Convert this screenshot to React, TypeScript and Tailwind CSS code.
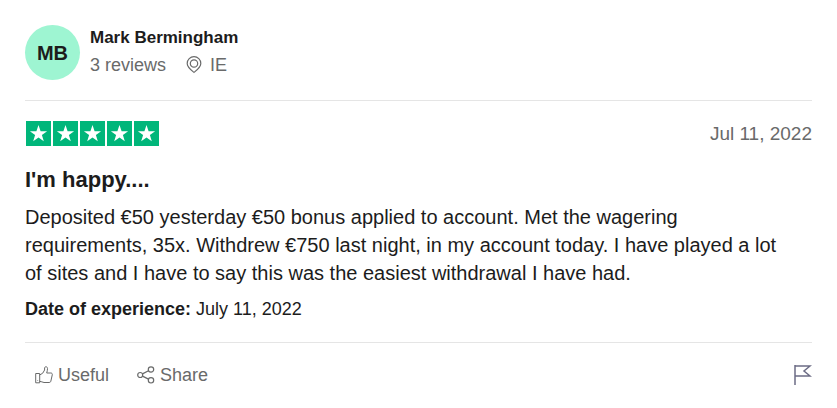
const review = {
  initials: "MB",
  name: "Mark Bermingham",
  reviews: "3 reviews",
  country: "IE",
  date: "Jul 11, 2022",
  title: "I'm happy....",
  text: "Deposited €50 yesterday €50 bonus applied to account. Met the wagering requirements, 35x. Withdrew €750 last night, in my account today. I have played a lot of sites and I have to say this was the easiest withdrawal I have had.",
  experience: "July 11, 2022",
};

function Stars() {
  return (
    <div className="flex gap-[2px] pl-px" role="img" aria-label="Rated 5 out of 5 stars">
      {[1, 2, 3, 4, 5].map((star) => (
        <svg key={star} viewBox="0 0 25 25" className="h-[25px] w-[25px]">
          <path fill="#00b67a" d="M0 0h25v25H0z" />
          <path
            fill="#fff"
            d="M12.5 4l2.1 6.2h6.500l-5.200 3.900 1.900 6.200-5.300-3.800-5.300 3.800 1.900-6.200-5.200-3.900h6.500z"
          />
        </svg>
      ))}
    </div>
  );
}

function PinIcon() {
  return (
    <svg viewBox="0 0 16 18" fill="none" stroke="currentColor" strokeWidth="1.2" className="h-[18px] w-4">
      <path d="M8 16.400C5 14 1.200 11.300 1.200 7.500a6.800 6.800 0 0 1 13.600 0C14.800 11.300 11 14 8 16.400z" />
      <circle cx="8" cy="7.500" r="3.700" />
    </svg>
  );
}

function ThumbIcon() {
  return (
    <svg viewBox="0 0 18 18" fill="none" stroke="currentColor" className="h-[18px] w-[18px]">
      <path d="M.7 7.500h4v9.300h-4zM4.700 9l3-1.800L9.600 4V2c0-1.700 2.900-1.700 2.900.4 0 1.500-.3 3-.8 4.600h4.100c1.100 0 1.700.7 1.500 1.700l-1.500 6.600c-.2.800-.8 1.200-1.600 1.200H9c-1.500 0-2.600-1.200-4.300-1.200" />
      <path d="M2.500 14.500h.6" />
    </svg>
  );
}

function ShareIcon() {
  return (
    <svg viewBox="0 0 18 18" fill="none" stroke="currentColor" strokeWidth="1.2" className="h-[18px] w-[18px]">
      <circle cx="3.200" cy="9" r="2.500" />
      <circle cx="14" cy="3.500" r="2.700" />
      <circle cx="14" cy="14.300" r="2.700" />
      <path d="M5.500 7.900l6-3.200M5.500 10.100l6 3" />
    </svg>
  );
}

function FlagIcon() {
  return (
    <svg viewBox="0 0 18 20" fill="none" stroke="currentColor" className="h-5 w-[18px]">
      <path strokeWidth="1.500" d="M1 0v20M1 1h15l-6 5 6 5H1" />
    </svg>
  );
}

export default function App() {
  return (
    <article className="min-h-screen bg-white px-[25px] py-[25px] font-['Liberation_Sans',Arial,sans-serif] text-[#1c1c1c]">
      <header className="flex items-start gap-[10px] border-b border-[#e5e5e5] pb-5">
        <div className="flex h-[55px] w-[55px] shrink-0 items-center justify-center rounded-full bg-[#9ef5d2] text-xl font-bold">
          {review.initials}
        </div>
        <div>
          <h1 className="text-[17px] leading-[26px] font-bold">{review.name}</h1>
          <div className="flex items-center gap-5 text-lg leading-7 text-[#696a6a]">
            <span>{review.reviews}</span>
            <span className="flex items-center gap-2">
              <PinIcon />
              {review.country}
            </span>
          </div>
        </div>
      </header>

      <section className="border-b border-[#e5e5e5] pt-5 pb-[19px]">
        <div className="flex items-center justify-between">
          <Stars />
          <time dateTime="2022-07-11" className="text-[19px] leading-6 text-[#696a6a]">
            {review.date}
          </time>
        </div>
        <h2 className="mt-5 text-[22px] leading-7 font-bold">{review.title}</h2>
        <p className="mt-[9px] pr-5 text-xl leading-7">{review.text}</p>
        <p className="mt-2 text-lg leading-7">
          <b>Date of experience:</b> {review.experience}
        </p>
      </section>

      <footer className="flex items-center gap-7 pt-5 pl-[10px] text-lg leading-6 text-[#696a6a]">
        <button type="button" className="flex items-center gap-[5px]">
          <ThumbIcon />
          Useful
        </button>
        <button type="button" className="flex items-center gap-[5px]">
          <ShareIcon />
          Share
        </button>
        <button type="button" aria-label="Report review" className="ml-auto text-[#6c6c85]">
          <FlagIcon />
        </button>
      </footer>
    </article>
  );
}
